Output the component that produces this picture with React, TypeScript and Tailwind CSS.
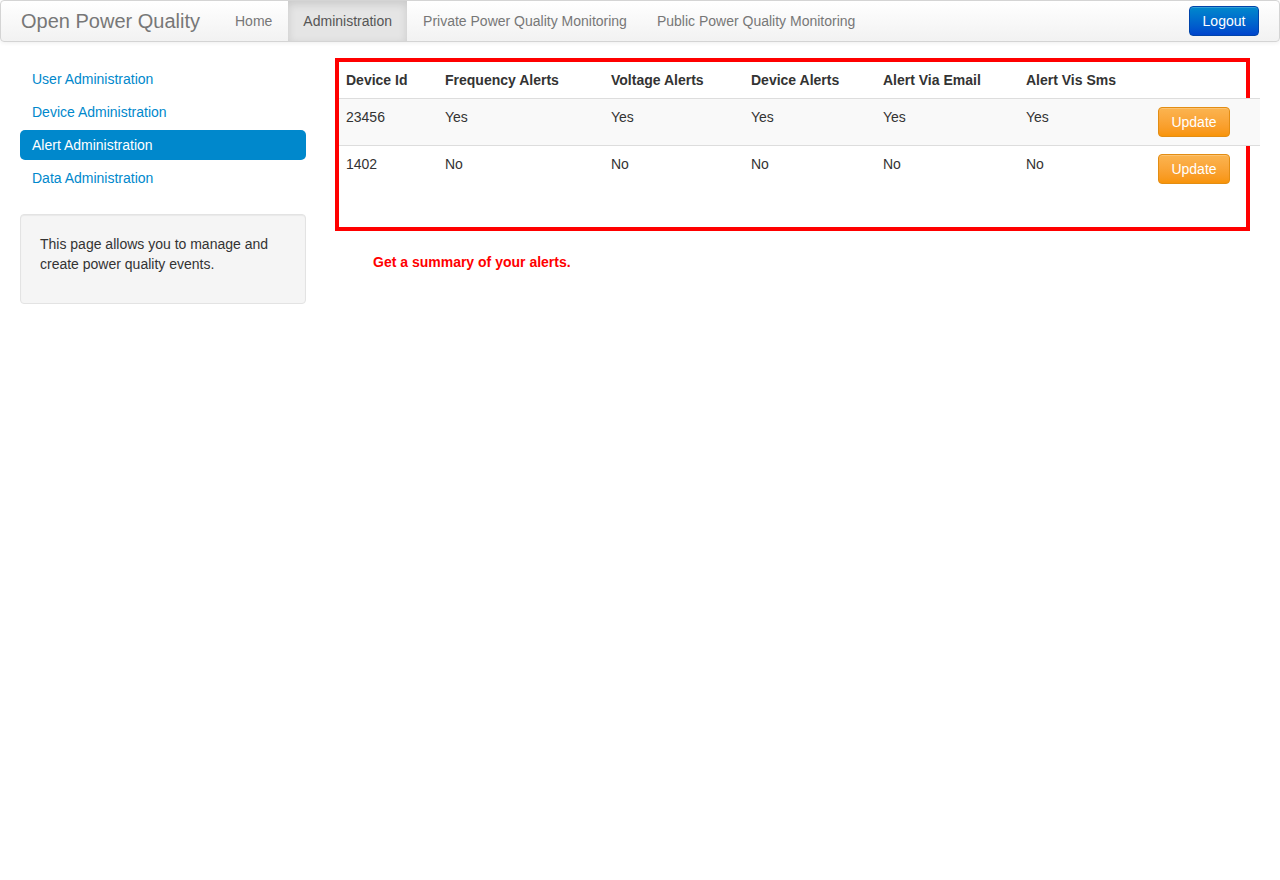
import React from "react";

const rows = [
  { id: "23456", v: ["Yes", "Yes", "Yes", "Yes", "Yes"] },
  { id: "1402", v: ["No", "No", "No", "No", "No"] },
];

const colW = ["w-[98px] pl-[7px]", "w-[166px] pl-[8px]", "w-[140px] pl-[8px]", "w-[132px] pl-[8px]", "w-[143px] pl-[8px]", "w-[132px] pl-[8px]", "w-[110px] pl-[8px]"];
const heads = ["Device Id", "Frequency Alerts", "Voltage Alerts", "Device Alerts", "Alert Via Email", "Alert Vis Sms", ""];

export default function App() {
  return (
    <div className="min-h-[880px] bg-white text-[14px] leading-[20px] text-[#333333]" style={{ fontFamily: '"Liberation Sans", Arial, sans-serif' }}>
      {/* Navbar */}
      <div className="flex h-[42px] items-center rounded-[4px] border border-[#d4d4d4] bg-gradient-to-b from-white to-[#f2f2f2] shadow-[0_1px_4px_rgba(0,0,0,0.065)]">
        <div className="px-[20px] text-[20px] leading-[20px] text-[#777777]">Open Power Quality</div>
        <div className="flex h-full items-stretch">
          <a className="flex items-center px-[15px] text-[#777777]">Home</a>
          <a className="ml-[1px] flex items-center bg-[#e5e5e5] px-[15px] text-[#555555] shadow-[inset_0_3px_8px_rgba(0,0,0,0.125)]">Administration</a>
          <a className="ml-[1px] flex items-center px-[15px] text-[#777777]">Private Power Quality Monitoring</a>
          <a className="flex items-center px-[15px] text-[#777777]">Public Power Quality Monitoring</a>
        </div>
        <div className="ml-auto pr-[20px]">
          <button className="h-[30px] w-[70px] rounded-[4px] border border-[#0044aa] bg-gradient-to-b from-[#0088cc] to-[#0044cc] text-[14px] text-white shadow-[inset_0_1px_0_rgba(255,255,255,0.2)]">
            Logout
          </button>
        </div>
      </div>

      <div className="flex px-[20px]">
        {/* Sidebar */}
        <div className="w-[286px] pt-[22px]">
          <div className="flex flex-col gap-[3px]">
            {["User Administration", "Device Administration", "Alert Administration", "Data Administration"].map((t) => (
              <a
                key={t}
                className={
                  "block h-[30px] rounded-[5px] px-[12px] py-[8px] leading-[14px] " +
                  (t === "Alert Administration" ? "bg-[#0088cc] text-white" : "text-[#0088cc]")
                }
              >
                {t}
              </a>
            ))}
          </div>
          <div className="mt-[21px] rounded-[4px] border border-[#e3e3e3] bg-[#f5f5f5] p-[19px] pb-[29px] shadow-[inset_0_1px_1px_rgba(0,0,0,0.05)]">
            <p>This page allows you to manage and create power quality events.</p>
          </div>
        </div>

        {/* Main */}
        <div className="ml-[29px] flex-1 pt-[16px]">
          <div className="w-[915px] border-4 border-[#ff0000] pb-[35px]">
            <table className="w-[921px] table-fixed border-collapse">
              <thead>
                <tr>
                  {heads.map((h, i) => (
                    <th key={i} className={colW[i] + " pr-[8px] py-[8px] text-left align-top font-bold"}>
                      {h}
                    </th>
                  ))}
                </tr>
              </thead>
              <tbody>
                {rows.map((r, ri) => (
                  <tr key={r.id} className={ri === 0 ? "bg-[#f9f9f9]" : ""}>
                    <td className="border-t border-[#dddddd] pl-[7px] pr-[8px] py-[8px] align-top">{r.id}</td>
                    {r.v.map((v, i) => (
                      <td key={i} className="border-t border-[#dddddd] px-[8px] py-[8px] align-top">
                        {v}
                      </td>
                    ))}
                    <td className="border-t border-[#dddddd] px-[8px] py-[8px] align-top">
                      <button className="h-[30px] w-[72px] rounded-[4px] border border-[#e38d13] bg-gradient-to-b from-[#fbb450] to-[#f89406] text-[14px] text-white shadow-[inset_0_1px_0_rgba(255,255,255,0.2)]">
                        Update
                      </button>
                    </td>
                  </tr>
                ))}
              </tbody>
            </table>
          </div>
          <div className="mt-[21px] pl-[38px] font-bold text-[#ff0000]">Get a summary of your alerts.</div>
        </div>
      </div>
    </div>
  );
}
